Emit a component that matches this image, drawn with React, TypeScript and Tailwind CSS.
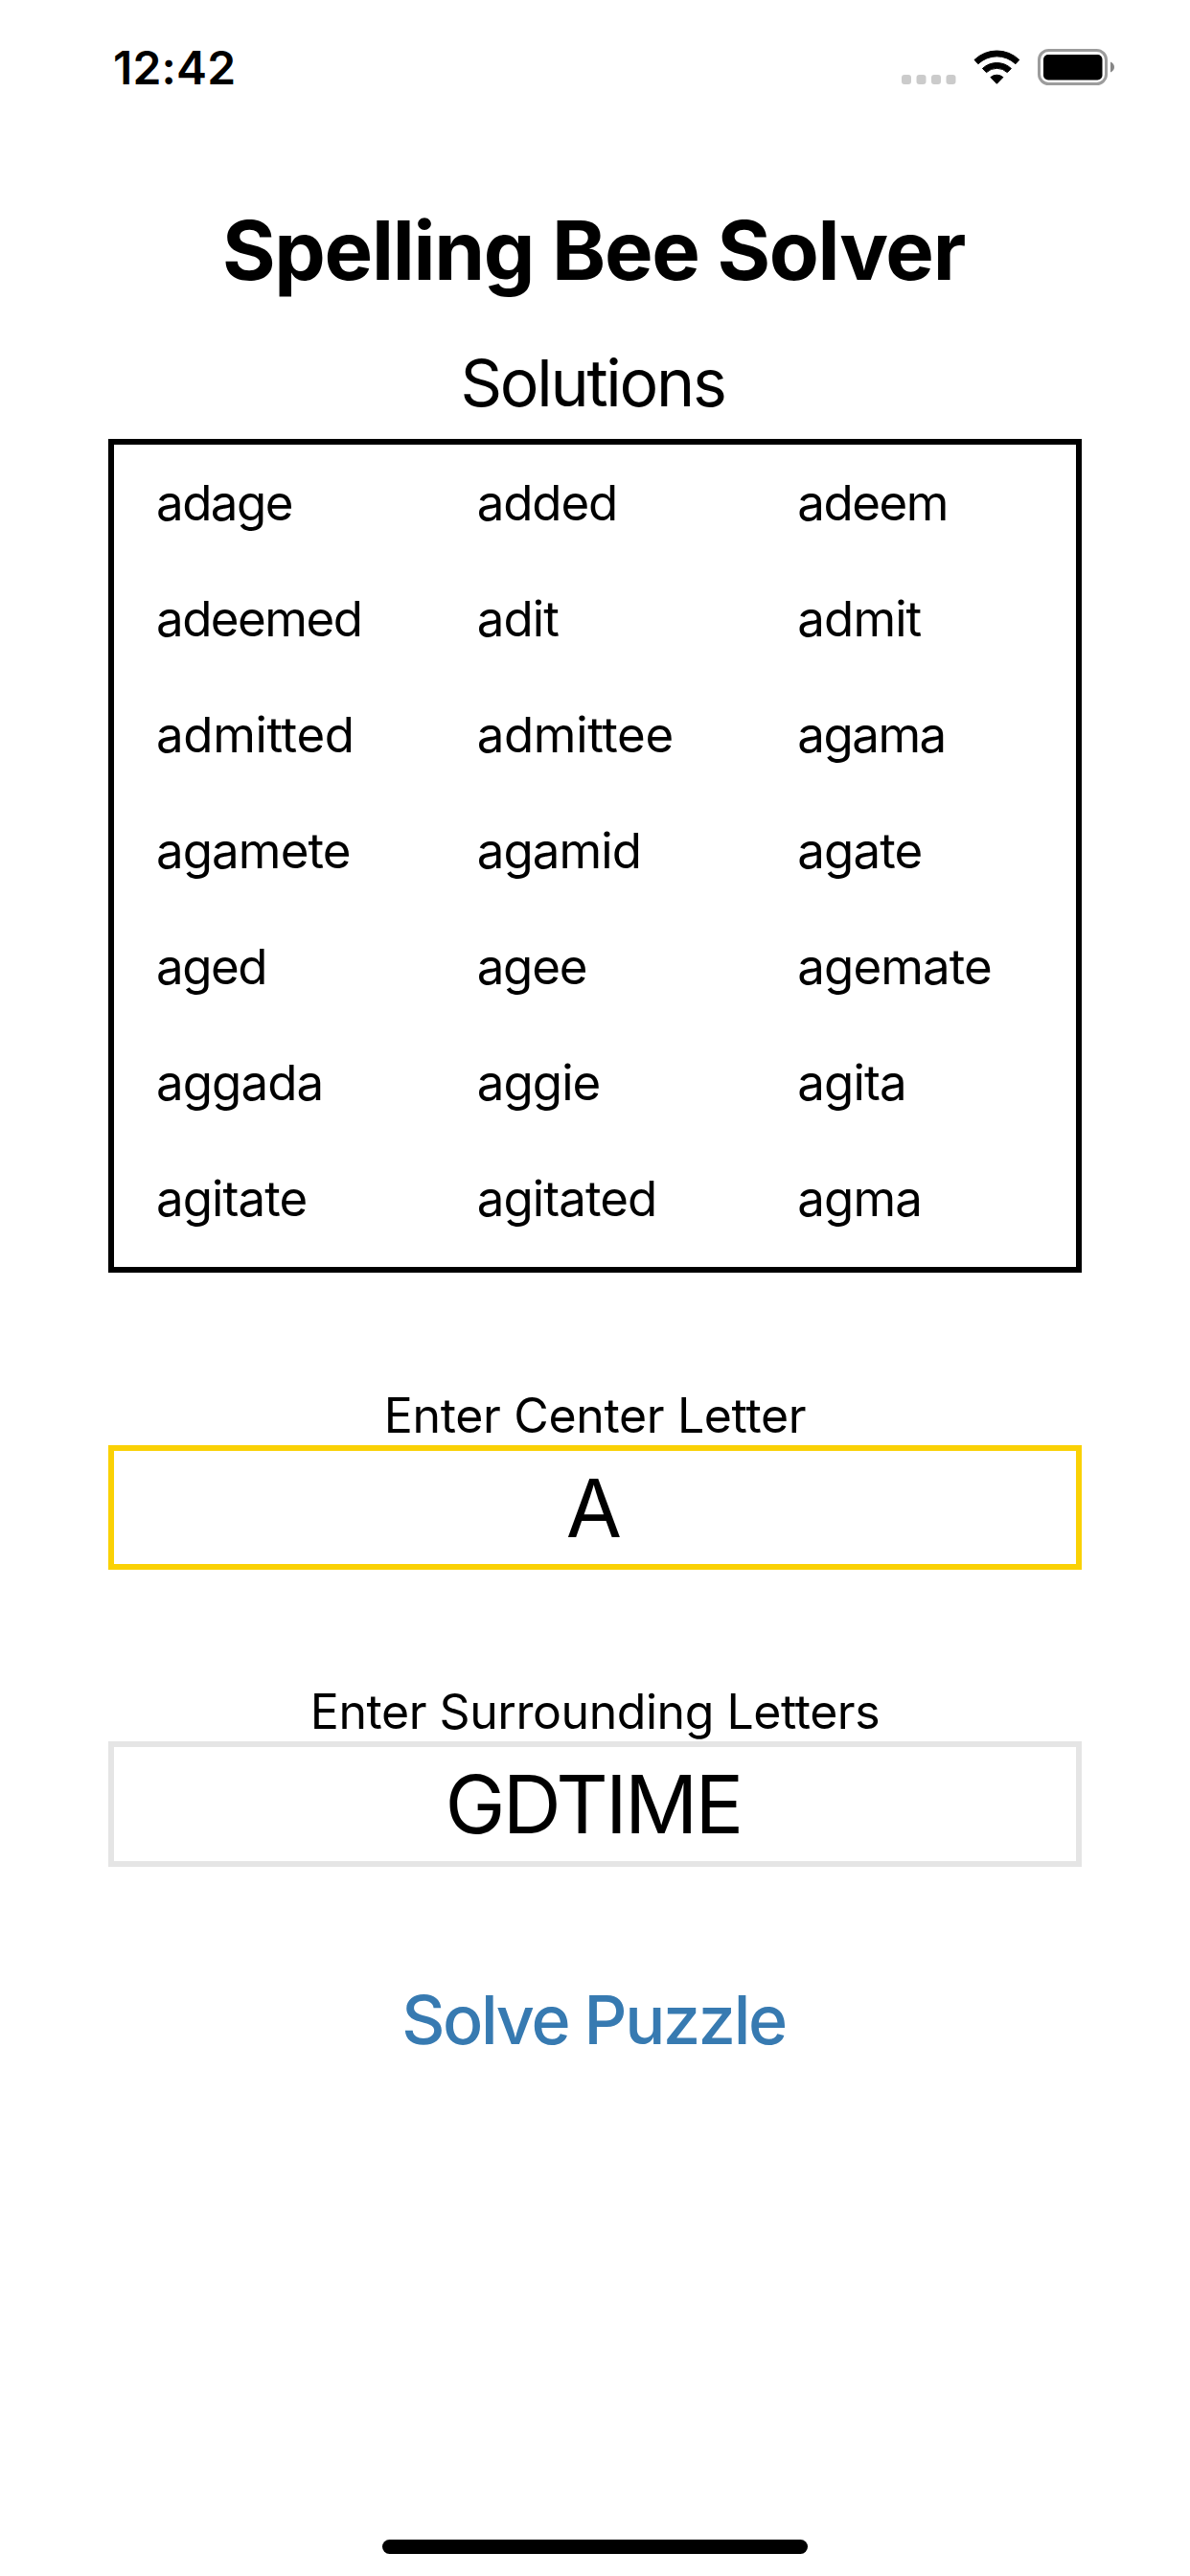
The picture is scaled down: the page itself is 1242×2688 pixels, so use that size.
const even = 'tracking-[-0.9px]';
const tight = 'tracking-[-1.5px]';
const loose = 'tracking-[-0.35px]';

const solutions = [
  { word: 'adage', tracking: tight },
  { word: 'added', tracking: 'tracking-[-1.1px]' },
  { word: 'adeem', tracking: tight },
  { word: 'adeemed', tracking: tight },
  { word: 'adit', tracking: even },
  { word: 'admit', tracking: even },
  { word: 'admitted', tracking: loose },
  { word: 'admittee', tracking: loose },
  { word: 'agama', tracking: tight },
  { word: 'agamete', tracking: even },
  { word: 'agamid', tracking: even },
  { word: 'agate', tracking: even },
  { word: 'aged', tracking: tight },
  { word: 'agee', tracking: 'tracking-[-1.2px]' },
  { word: 'agemate', tracking: even },
  { word: 'aggada', tracking: even },
  { word: 'aggie', tracking: even },
  { word: 'agita', tracking: even },
  { word: 'agitate', tracking: even },
  { word: 'agitated', tracking: even },
  { word: 'agma', tracking: even },
];

function CellularDots() {
  return (
    <svg width="57" height="10" viewBox="0 0 57 10" fill="#cbcbcb" className="mt-[26px]">
      <rect x="0" width="10" height="10" rx="3" />
      <rect x="15.500" width="10" height="10" rx="3" />
      <rect x="31" width="10" height="10" rx="3" />
      <rect x="46.500" width="10" height="10" rx="3" />
    </svg>
  );
}

function WifiIcon() {
  return (
    <svg width="49" height="36" viewBox="0 0 49 36" stroke="black" strokeLinejoin="round" className="ml-[18px]">
      <path d="M1 10.400A33.800 33.800 0 0 1 47.800 10.400L43.900 14.700A28.200 28.200 0 0 0 4.900 14.700Z" />
      <path d="M9.400 19.500A21.800 21.800 0 0 1 39.400 19.500L35.300 23.600A16 16 0 0 0 13.500 23.600Z" />
      <path d="M17.900 28.600A10 10 0 0 1 30.900 28.600L24.400 35.300Z" />
    </svg>
  );
}

function BatteryIcon() {
  return (
    <svg width="80" height="38" viewBox="0 0 80 38" className="ml-[18px]">
      <rect x="1.500" y="1.500" width="70" height="35" rx="10" fill="none" stroke="#9c9c9c" strokeWidth="3" />
      <rect x="6" y="6" width="61.500" height="26.500" rx="5" />
      <path d="M76 13.500C78.500 14.500 80 16.500 80 19S78.500 23.500 76 24.500Z" fill="#868686" />
    </svg>
  );
}

export default function App() {
  return (
    <main className="flex h-[2688px] w-[1242px] flex-col bg-white font-['Inter',sans-serif] text-black">
      <header className="flex h-[140px] shrink-0 items-center justify-between pr-[79px] pl-[118px]">
        <span className="mt-[1px] text-[48px] leading-none font-semibold tracking-[0.2px]">12:42</span>
        <div className="flex items-center">
          <CellularDots />
          <WifiIcon />
          <BatteryIcon />
        </div>
      </header>
      <h1 className="mt-[70px] pr-[3px] text-center text-[85px] leading-[104px] font-bold tracking-[-1.3px]">Spelling Bee Solver</h1>
      <h2 className="mt-[44px] pr-[5px] text-center text-[68px] leading-[82px] tracking-[-2.3px]">Solutions</h2>
      <section className="mx-[113px] mt-[18px] grid h-[870px] shrink-0 auto-rows-[121px] grid-cols-3 content-start border-6 border-black text-[51px] leading-[121px]">
        {solutions.map(({ word, tracking }) => (
          <span key={word} className={`pl-[44px] ${tracking}`}>{word}</span>
        ))}
      </section>
      <label className="mt-[119px] text-center text-[50px] leading-[60px] tracking-[-0.35px]">Enter Center Letter</label>
      <div className="mx-[113px] mt-[1px] flex h-[130px] shrink-0 items-center justify-center border-6 border-[#fad105] pr-[2px] text-[84.500px]">A</div>
      <label className="mt-[118px] text-center text-[50px] leading-[60px] tracking-[-0.45px]">Enter Surrounding Letters</label>
      <div className="mx-[113px] mt-[1px] flex h-[131px] shrink-0 items-center justify-center border-6 border-[#e5e5e5] pr-[4px] text-[84.500px] tracking-[-2.8px]">GDTIME</div>
      <button className="mt-[118px] self-center pr-[3px] text-[70px] leading-[84px] font-medium tracking-[-2.3px] text-[#377ab1]">Solve Puzzle</button>
      <div className="mt-auto mb-[23px] h-[15px] w-[444px] self-center rounded-full bg-black" />
    </main>
  );
}
